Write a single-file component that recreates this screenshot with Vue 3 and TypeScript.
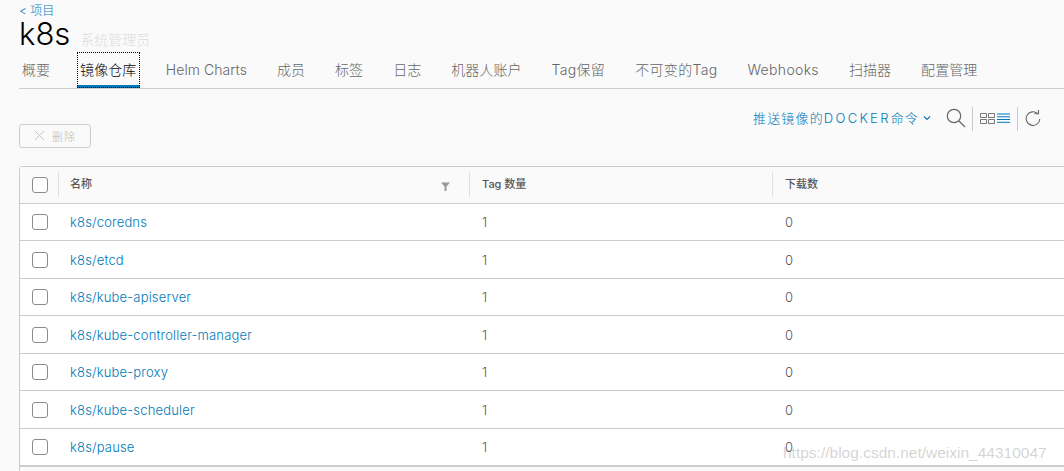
<script setup lang="ts">
const tabs: string[] = ['概要', '镜像仓库', 'Helm Charts', '成员', '标签', '日志', '机器人账户', 'Tag保留', '不可变的Tag', 'Webhooks', '扫描器', '配置管理']
const rows: string[] = ['k8s/coredns', 'k8s/etcd', 'k8s/kube-apiserver', 'k8s/kube-controller-manager', 'k8s/kube-proxy', 'k8s/kube-scheduler', 'k8s/pause']
const isWide = (t: string): boolean => t.includes('Tag') || t === 'Webhooks'
</script>

<template>
  <div class="page">
    <a class="crumb">&lt; 项目</a>
    <div class="title-row">
      <h1>k8s</h1>
      <span class="role">系统管理员</span>
    </div>
    <nav class="tabs">
      <span v-for="(t, i) in tabs" :key="t" class="tab" :class="{ active: i === 1, wide: isWide(t) }">{{ t }}</span>
    </nav>
    <div class="toolbar">
      <button class="del">
        <svg width="11" height="11" viewBox="0 0 11 11"><path d="M1 1l9 9M10 1l-9 9" stroke="#c4c4c4" stroke-width="1" fill="none" /></svg>
        <span>删除</span>
      </button>
      <div class="actions">
        <span class="push">推送镜像的<span class="latin">DOCKER</span>命令</span>
        <svg class="chev" width="8" height="6" viewBox="0 0 8 6"><path d="M1 1.5l3 3 3-3" stroke="#0079b8" stroke-width="1.1" fill="none" /></svg>
        <svg class="search" width="20" height="20" viewBox="0 0 20 20"><circle cx="8" cy="8" r="6.7" stroke="#666" stroke-width="1.2" fill="none" /><path d="M13 13l6 6" stroke="#666" stroke-width="1.2" /></svg>
        <i class="sep"></i>
        <svg class="cards" width="15" height="11" viewBox="0 0 15 11"><path d="M.5.5h6v4h-6zM8.500.5h6v4h-6zM.5 6.500h6v4h-6zM8.500 6.500h6v4h-6z" stroke="#777" fill="none" /></svg>
        <svg class="list" width="13" height="11" viewBox="0 0 13 11"><path d="M0 1h13M0 3.800h13M0 6.500h13M0 9.300h13" stroke="#0079b8" stroke-width="1" fill="none" /></svg>
        <i class="sep sep2"></i>
        <svg class="refresh" width="16" height="17" viewBox="0 0 16 17"><path d="M12.500 3.500A6.800 6.800 0 1 0 14.800 9" stroke="#666" stroke-width="1.1" fill="none" /><path d="M9.500 3.800h4V0" stroke="#666" stroke-width="1.1" fill="none" /></svg>
      </div>
    </div>
    <div class="table">
      <div class="row head">
        <div class="cell check"><span class="box"></span></div>
        <div class="cell name">名称
          <svg class="filter" width="9" height="9" viewBox="0 0 9 9"><path d="M0 .5h9L5.500 4.500V9h-2V4.500z" fill="#999" /></svg>
        </div>
        <div class="cell tag">Tag 数量</div>
        <div class="cell dl">下载数</div>
      </div>
      <div v-for="r in rows" :key="r" class="row">
        <div class="cell check"><span class="box"></span></div>
        <div class="cell name"><a>{{ r }}</a></div>
        <div class="cell tag">1</div>
        <div class="cell dl">0</div>
      </div>
      <div class="foot"></div>
    </div>
    <span class="mark">https://blog.csdn.net/weixin_44310047</span>
  </div>
</template>

<style>
html, body { margin: 0; background: #fafafa; overflow: hidden; }
</style>

<style scoped>
.page {
  position: relative;
  height: 471px;
  overflow: hidden;
  padding-left: 19px;
  font-family: Inter, "Noto Sans CJK SC", sans-serif;
  color: #565656;
  background: #fafafa;
  box-sizing: border-box;
}
.crumb {
  display: block;
  height: 16px;
  padding-top: 4px;
  font-size: 12px;
  font-weight: 300;
  line-height: 14px;
  color: #0079b8;
}
.title-row { display: flex; align-items: baseline; height: 32px; }
h1 {
  margin: 0;
  font-size: 31px;
  font-weight: 300;
  line-height: 28px;
  color: #000;
}
.role { margin-left: 10px; font-size: 14px; font-weight: 300; color: #dcdcdc; }
.tabs {
  display: flex;
  gap: 24px;
  height: 36px;
  border-bottom: 1px solid #ccc;
  font-size: 14px;
  font-weight: 300;
}
.tab { padding: 0 3px; line-height: 36px; color: #666; white-space: nowrap; letter-spacing: .05px; }
.wide { letter-spacing: .33px; }
.active {
  color: #000;
  box-shadow: inset 0 -3px 0 #0079b8;
  outline: 1px dotted #000;
  outline-offset: -1px;
  padding: 0 3.500px 0 3.500px;
  margin: 0 -1px 0 -.5px;
}
.toolbar { display: flex; justify-content: space-between; position: relative; height: 77px; }
.del {
  display: flex;
  align-items: center;
  justify-content: center;
  gap: 7px;
  margin-top: 35px;
  width: 72px;
  height: 24px;
  padding: 0 0 1px;
  border: 1px solid #ccc;
  border-radius: 3px;
  background: transparent;
  font: 300 11px Inter, "Noto Sans CJK SC", sans-serif;
  letter-spacing: 1px;
  color: #bbb;
}
.actions { display: flex; align-items: center; height: 24px; margin-top: 18px; padding-right: 23px; }
.push {
  font-size: 13px;
  font-weight: 300;
  letter-spacing: 1.15px;
  color: #0079b8;
  white-space: nowrap;
  margin-top: -3px;
}
.latin { letter-spacing: 2.3px; }
.chev { margin-left: 4px; margin-top: -3px; }
.search { margin-left: 15px; margin-top: -2px; }
.sep { width: 1px; height: 24px; margin-left: 6px; background: #ccc; }
.cards { margin-left: 7px; margin-top: -2px; }
.list { margin-left: 2px; margin-top: -2px; }
.sep2 { margin-left: 7px; }
.refresh { margin-left: 7px; margin-top: -2px; }
.table {
  width: 1060px;
  background: #fff;
  border: 1px solid #ccc;
  border-radius: 3px 0 0 0;
  font-size: 13px;
  font-weight: 300;
}
.row { display: flex; height: 37.5px; border-bottom: 1px solid #ccc; box-sizing: border-box; align-items: center; letter-spacing: .17px; }
.head { height: 36.9px; background: #fafafa; font-size: 11px; font-weight: 500; color: #565656; letter-spacing: 0; }
.cell { box-sizing: border-box; }
.check { width: 38px; padding-left: 12px; display: flex; align-items: center; }
.box {
  width: 16px;
  height: 16px;
  border: 1px solid #8c8c8c;
  border-radius: 3px;
  background: #fff;
  box-sizing: border-box;
}
.name { width: 411px; padding-left: 12px; position: relative; }
.tag { width: 303px; padding-left: 13px; color: #565656; }
.dl { padding-left: 13px; color: #565656; }
.head .cell { height: 25px; line-height: 25px; }
.head .name, .head .tag, .head .dl { border-left: 1px solid #e0e0e0; padding-left: 12px; }
.head .name { padding-left: 11px; }
a { color: #0079b8; }
.filter { position: absolute; right: 19px; top: 10px; }
.foot { height: 20px; background: #fafafa; border-top: 1px solid #ccc; }
.mark {
  position: absolute;
  left: 783px;
  top: 444px;
  font: 15.500px "Liberation Sans", sans-serif;
  color: rgba(130, 130, 130, .35);
  white-space: nowrap;
}
</style>
